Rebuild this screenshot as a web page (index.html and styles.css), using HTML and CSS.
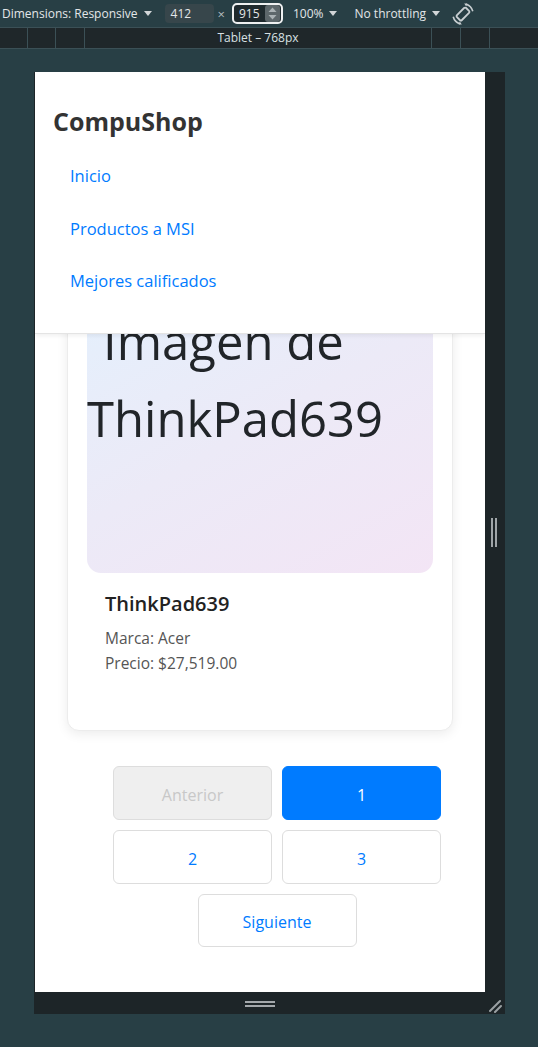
FILE: index.html
```html
<!DOCTYPE html>
<html lang="es">
<head>
<meta charset="utf-8">
<title>CompuShop – DevTools</title>
<link rel="stylesheet" href="styles.css">
</head>
<body>
<div class="devtools">
  <div class="toolbar">
    <span class="tb-text dims">Dimensions: Responsive</span>
    <svg class="caret" width="8" height="5" viewBox="0 0 8 5"><path d="M0 0h8L4 5z"/></svg>
    <span class="num-box">412</span>
    <span class="times">×</span>
    <span class="num-box active">915<svg class="spin" width="15" height="17" viewBox="0 0 15 17"><rect width="15" height="17" rx="3" fill="#5d676b"/><path d="M3.5 7L7.5 2.5 11.5 7z" fill="#aab2b5"/><path d="M3.5 10L7.5 14.5 11.5 10z" fill="#aab2b5"/></svg></span>
    <span class="tb-text zoom">100%</span>
    <svg class="caret" width="8" height="5" viewBox="0 0 8 5"><path d="M0 0h8L4 5z"/></svg>
    <span class="tb-text thr">No throttling</span>
    <svg class="caret" width="8" height="5" viewBox="0 0 8 5"><path d="M0 0h8L4 5z"/></svg>
    <svg class="rotate" width="24" height="22" viewBox="0 0 24 22">
      <g transform="rotate(45 12 11)"><rect x="8.5" y="4.5" width="7" height="13" rx="1.5" fill="none" stroke="#c9cfd2" stroke-width="1.8"/></g>
      <path d="M15 1.2a10 10 0 0 1 6.8 7" fill="none" stroke="#c9cfd2" stroke-width="1.6"/>
      <path d="M13.2 0.6l3.2 0 -1.2 2.8z" fill="#c9cfd2"/>
      <path d="M9 20.8a10 10 0 0 1-6.8-7" fill="none" stroke="#c9cfd2" stroke-width="1.6"/>
      <path d="M10.8 21.4l-3.2 0 1.2-2.8z" fill="#c9cfd2"/>
    </svg>
  </div>
  <div class="ruler">
    <div class="seg w27"></div>
    <div class="seg w27"></div>
    <div class="seg w28"></div>
    <div class="seg center">Tablet – 768px</div>
    <div class="seg w28"></div>
    <div class="seg w28"></div>
    <div class="seg rest"></div>
  </div>
</div>

<div class="stage">
  <div class="device">
    <div class="device-row">
      <div class="viewport">
        <main class="page">
          <article class="card">
            <div class="card-img">Imagen de ThinkPad639</div>
            <div class="card-body">
              <h2 class="card-title">ThinkPad639</h2>
              <p class="card-line">Marca: Acer</p>
              <p class="card-line">Precio: $27,519.00</p>
            </div>
          </article>
          <nav class="pager">
            <button class="pg disabled">Anterior</button>
            <button class="pg current">1</button>
            <button class="pg">2</button>
            <button class="pg">3</button>
            <button class="pg short">Siguiente</button>
          </nav>
        </main>
        <header class="navbar">
          <div class="brand">CompuShop</div>
          <ul class="nav-links">
            <li><a href="#">Inicio</a></li>
            <li><a href="#">Productos a MSI</a></li>
            <li><a href="#">Mejores calificados</a></li>
          </ul>
        </header>
      </div>
      <div class="side-strip"><span class="grip"></span><span class="grip"></span></div>
    </div>
    <div class="bottom-bar">
      <div class="bb-main"><span class="hgrip"></span></div>
      <div class="bb-corner">
        <svg width="14" height="14" viewBox="0 0 14 14"><path d="M2 12L12 2M7 13L13 7" stroke="#9aa0a3" stroke-width="2" stroke-linecap="round"/></svg>
      </div>
    </div>
  </div>
</div>
</body>
</html>
```

FILE: styles.css
```css
* { box-sizing: border-box; }

html, body {
  margin: 0;
  padding: 0;
}

body {
  width: 538px;
  height: 1047px;
  background: #283f45;
  font-family: "Open Sans", "Noto Sans", sans-serif;
  overflow: hidden;
}

/* ---------- DevTools toolbar ---------- */
.toolbar {
  height: 28px;
  border-bottom: 1px solid #3b5056;
  background: #283f45;
  display: flex;
  align-items: center;
  padding-left: 2px;
  color: #e3e6e8;
  font-size: 12px;
}

.tb-text { white-space: nowrap; line-height: 16px; }

.caret { fill: #d2d6d8; flex: none; margin-left: 6px; }

.num-box {
  height: 19px;
  width: 49px;
  margin-left: 13px;
  background: #37464b;
  border-radius: 4px;
  padding-left: 6px;
  line-height: 19px;
  display: flex;
  align-items: center;
}

.num-box.active {
  width: 51px;
  height: 21px;
  margin-left: 7px;
  background: #1f2a2e;
  border: 2px solid #eef0f1;
  border-radius: 5px;
  padding-left: 5px;
  padding-right: 1px;
  justify-content: space-between;
}

.spin { flex: none; }

.times { margin-left: 4px; color: #b5bcbf; font-size: 13px; }

.zoom { margin-left: 10px; }
.thr { margin-left: 17px; }
.rotate { margin-left: 11px; flex: none; }

.ruler {
  height: 21px;
  background: #1f272a;
  border-bottom: 1px solid #3b5056;
  display: flex;
}

.seg {
  border-right: 1px solid #3b5056;
  flex: none;
}
.seg.w27 { width: 28px; }
.seg.w28 { width: 29px; }
.seg.center {
  width: 347px;
  color: #d8e0e3;
  font-size: 12px;
  text-align: center;
  line-height: 20px;
}
.seg.rest { flex: 1; border-right: none; }

/* ---------- Device frame ---------- */
.stage {
  padding: 23px 0 0 34px;
}

.device {
  width: 471px;
  background: #1d2528;
}

.device-row {
  display: flex;
  padding-left: 1px;
}

.viewport {
  position: relative;
  width: 450px;
  height: 920px;
  background: #ffffff;
  overflow: hidden;
}

.side-strip {
  width: 20px;
  display: flex;
  align-items: center;
  padding-left: 6px;
  gap: 2px;
}

.grip {
  width: 2px;
  height: 29px;
  background: #9fa5a8;
}

.bottom-bar {
  height: 22px;
  display: flex;
}

.bb-main {
  width: 451px;
  display: flex;
  justify-content: center;
  padding-top: 9px;
}

.hgrip {
  width: 30px;
  height: 6px;
  border-top: 2px solid #a3a8ab;
  border-bottom: 2px solid #a3a8ab;
}

.bb-corner {
  width: 20px;
  padding: 4px 0 0 3px;
}

/* ---------- Page inside viewport ---------- */
.page {
  padding-top: 181px;
  color: #212529;
}

.navbar {
  position: absolute;
  top: 0;
  left: 0;
  right: 0;
  height: 262px;
  background: #ffffff;
  border-bottom: 1px solid #e4e4e4;
  box-shadow: 0 2px 4px rgba(0, 0, 0, 0.06);
  padding: 34px 18px 0;
}

.brand {
  font-size: 25px;
  font-weight: 700;
  line-height: 30px;
  color: #333333;
}

.nav-links {
  list-style: none;
  margin: 14px 0 0;
  padding: 0 0 0 17px;
}

.nav-links li {
  padding: 14px 0;
  line-height: 24.5px;
  font-size: 16.5px;
}

.nav-links a {
  color: #007bff;
  text-decoration: none;
}

.card {
  margin: 0 32px;
  padding: 20px 20px 0;
  border: 1px solid #ececec;
  border-radius: 12px;
  box-shadow: 0 3px 12px rgba(0, 0, 0, 0.08);
  background: #fff;
}

.card-img {
  height: 300px;
  margin: -1px -1px 0;
  border-radius: 14px;
  background: linear-gradient(150deg, #e3f0fd 0%, #eceaf7 50%, #f3e5f5 100%);
  padding-top: 30px;
  font-size: 49px;
  line-height: 77px;
  text-indent: 16px;
  color: #212529;
}

.card-body {
  padding: 18px 17px 54px;
}

.card-title {
  margin: 0 0 9px;
  font-size: 20px;
  font-weight: 600;
  line-height: 26px;
  color: #222;
}

.card-line {
  margin: 0;
  font-size: 15.5px;
  line-height: 25px;
  color: #555;
}

.pager {
  width: 328px;
  margin: 35px 0 0 78px;
  display: flex;
  flex-wrap: wrap;
  justify-content: center;
  gap: 10px;
}

.pg {
  flex: 0 0 159px;
  height: 54px;
  border: 1px solid #dddddd;
  border-radius: 6px;
  background: #ffffff;
  color: #007bff;
  font-family: "Open Sans", "Noto Sans", sans-serif;
  font-size: 16px;
  padding: 3px 0 0;
}

.pg.short { height: 53px; }

.pg.disabled {
  background: #efefef;
  color: #c8c8c8;
}

.pg.current {
  background: #007bff;
  border-color: #007bff;
  color: #ffffff;
}
```
